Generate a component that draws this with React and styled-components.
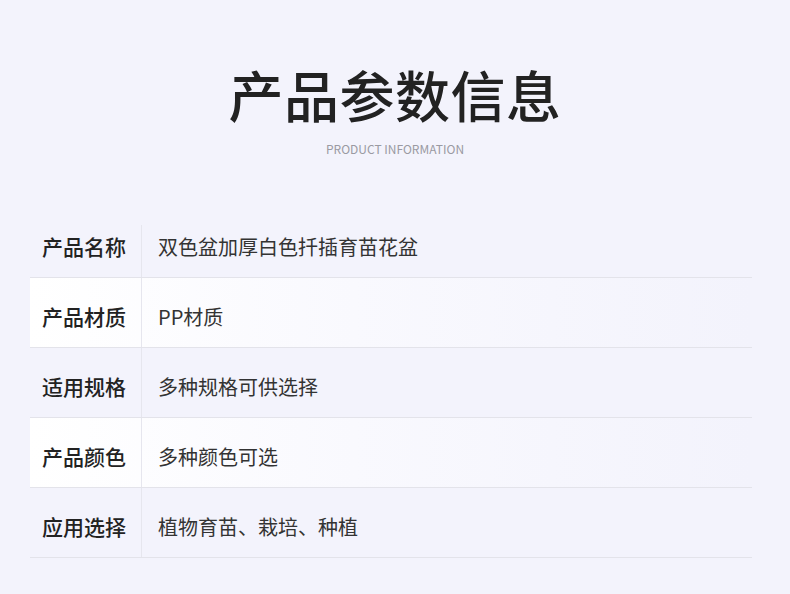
import React from "react";
import styled, { createGlobalStyle } from "styled-components";

const GlobalStyle = createGlobalStyle`
  body {
    margin: 0;
    background: #f3f3fc;
    font-family: "Noto Sans CJK SC", "Noto Sans", sans-serif;
  }
`;

const Page = styled.div`
  width: 790px;
  height: 594px;
  background: #f3f3fc;
  overflow: hidden;
`;

const Header = styled.div`
  padding-top: 66px;
  display: flex;
  flex-direction: column;
  align-items: center;
`;

const Title = styled.h1`
  margin: 0;
  font-size: 55px;
  line-height: 55px;
  font-weight: 500;
  color: #222;
  letter-spacing: 0.5px;
`;

const Subtitle = styled.div`
  margin-top: 20px;
  font-size: 12px;
  line-height: 16px;
  color: #9a9aa2;
`;

const Table = styled.div`
  margin: 51px 38px 0 30px;
  display: flex;
  flex-direction: column;
`;

const Row = styled.div`
  display: flex;
  height: 70px;
  border-bottom: 1px solid #e3e3ea;
  box-sizing: border-box;
  background: ${p =>
    p.$light
      ? "linear-gradient(90deg, #ffffff 0%, #f9f9fe 45%, #f3f3fc 100%)"
      : "transparent"};
`;

const Label = styled.div`
  position: relative;
  width: 112px;
  padding: 7px 0 0 12px;
  box-sizing: border-box;
  display: flex;
  align-items: center;
  font-size: 21px;
  font-weight: 500;
  color: #222;

  &::after {
    content: "";
    position: absolute;
    right: 0;
    top: ${p => (p.$first ? "17px" : "0")};
    bottom: 0;
    width: 1px;
    background: #e6e6ee;
  }
`;

const Value = styled.div`
  display: flex;
  align-items: center;
  padding: 7px 0 0 16px;
  font-size: 20px;
  color: #333;
`;

const rows = [
  ["产品名称", "双色盆加厚白色扦插育苗花盆"],
  ["产品材质", "PP材质"],
  ["适用规格", "多种规格可供选择"],
  ["产品颜色", "多种颜色可选"],
  ["应用选择", "植物育苗、栽培、种植"],
];

export default function App() {
  return (
    <Page>
      <GlobalStyle />
      <Header>
        <Title>产品参数信息</Title>
        <Subtitle>PRODUCT INFORMATION</Subtitle>
      </Header>
      <Table>
        {rows.map(([k, v], i) => (
          <Row key={k} $light={i % 2 === 1}>
            <Label $first={i === 0}>{k}</Label>
            <Value>{v}</Value>
          </Row>
        ))}
      </Table>
    </Page>
  );
}
